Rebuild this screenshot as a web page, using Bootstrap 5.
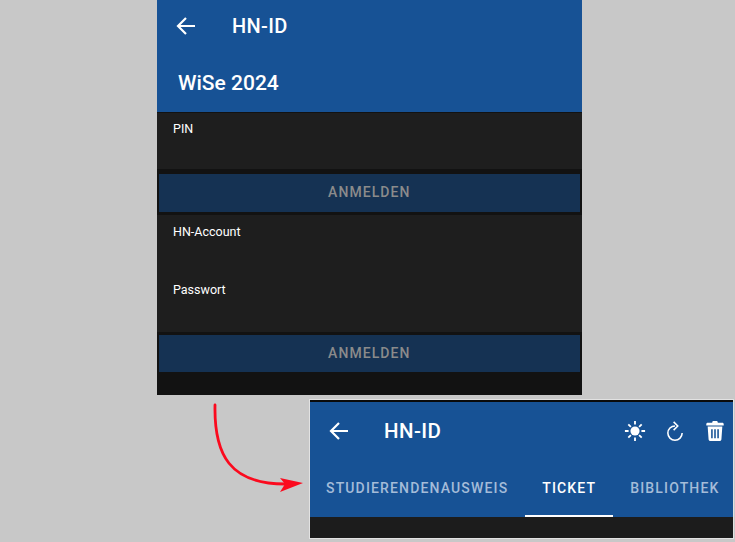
<!DOCTYPE html>
<html lang="de">
<head>
  <meta charset="UTF-8" />
  <meta name="viewport" content="width=device-width, initial-scale=1.0" />
  <title>HN-ID</title>
  <link href="https://cdn.jsdelivr.net/npm/bootstrap@5.3.3/dist/css/bootstrap.min.css" rel="stylesheet">
  <style>
    body {
      background-color: #c8c8c8;
      font-family: Roboto, "Liberation Sans", sans-serif;
      height: 542px;
      overflow: hidden;
      position: relative;
    }

    .shot {
      position: absolute;
      background-color: #121212;
      color: #fff;
    }

    .shot-main {
      left: 157px;
      top: 0;
      width: 425px;
      height: 395px;
    }

    .shot-tabs {
      left: 310px;
      top: 400px;
      width: 423px;
      height: 138px;
      border-top: 2px solid #0a0a0a;
      box-shadow: 0 0 0 1px #e2e2e2;
    }

    .app-blue {
      background-color: #175295;
    }

    .head-main {
      height: 112px;
    }

    .tool-row {
      height: 52px;
    }

    .back-btn {
      width: 20px;
      height: 20px;
      margin-left: 19px;
    }

    .app-title {
      font-size: 20px;
      font-weight: 500;
      line-height: 1;
      letter-spacing: .35px;
      margin-left: 36px;
    }

    .term-title {
      font-size: 21px;
      font-weight: 500;
      line-height: 1;
      padding: 21px 0 0 21px;
    }

    .input-panel {
      background-color: #1e1e1e;
      margin-top: 1px;
      padding-left: 16px;
      font-size: 12.5px;
      line-height: 16px;
    }

    .panel-pin {
      height: 56px;
      padding-top: 8px;
    }

    .panel-account {
      height: 117px;
      padding-top: 9px;
      margin-top: 3px;
    }

    .panel-account .field-gap {
      margin-top: 42px;
    }

    .login-btn {
      background-color: #153253;
      color: #8b8b8b;
      border: 0;
      border-radius: 0;
      font-size: 14px;
      font-weight: 500;
      letter-spacing: 1.05px;
      height: 37.5px;
      margin: 5px 2px 0 1.500px;
      padding: 0;
    }

    .login-btn:disabled {
      background-color: #153253;
      color: #8b8b8b;
      opacity: 1;
    }

    .panel-account + .login-btn {
      margin-top: 3px;
    }

    .head-tabs {
      height: 115px;
    }

    .tool-row-tabs {
      height: 58px;
    }

    .tool-row-tabs .back-btn {
      margin-left: 19px;
    }

    .tool-row-tabs .app-title {
      font-size: 20.5px;
      letter-spacing: .4px;
      margin-left: 35px;
    }

    .tool-icons {
      gap: 18px;
      padding-right: 7px;
    }

    .tool-icons svg {
      width: 22px;
      height: 22px;
      fill: #fff;
    }

    .tool-icons .icon-line {
      fill: none;
      stroke: #fff;
      stroke-width: 1.7;
    }

    .tab-strip {
      height: 57px;
      margin-left: -1px;
    }

    .tab-item {
      color: #a4bcd9;
      font-size: 14px;
      font-weight: 500;
      letter-spacing: 1.15px;
      line-height: 1;
      padding: 0 17px 20px;
      display: flex;
      align-items: flex-end;
      border-bottom: 2px solid transparent;
    }

    .tab-item.is-active {
      color: #fff;
      border-bottom-color: #fff;
    }

    .panel-tail {
      height: 21px;
      margin-top: 0;
      background-color: #1c1c1c;
    }

    .flow-arrow {
      position: absolute;
      left: 205px;
      top: 400px;
      width: 110px;
      height: 100px;
    }
  </style>
</head>
<body>
  <!-- Obere Aufnahme: Anmeldung -->
  <div class="shot shot-main d-flex flex-column">
    <div class="app-blue head-main">
      <div class="tool-row d-flex align-items-center">
        <svg class="back-btn" viewBox="0 0 20 20" fill="none" stroke="#fff" stroke-width="2.2"><path d="M19 10H2M10 2l-8 8 8 8"/></svg>
        <div class="app-title">HN-ID</div>
      </div>
      <div class="term-title">WiSe 2024</div>
    </div>
    <div class="input-panel panel-pin">PIN</div>
    <button class="btn login-btn" type="button" disabled>ANMELDEN</button>
    <div class="input-panel panel-account">
      <div>HN-Account</div>
      <div class="field-gap">Passwort</div>
    </div>
    <button class="btn login-btn" type="button" disabled>ANMELDEN</button>
  </div>

  <!-- Pfeil zwischen den Aufnahmen -->
  <svg class="flow-arrow" viewBox="0 0 110 100">
    <path d="M10 5C9 55 25 84 80 84" fill="none" stroke="#fb0a1e" stroke-width="2.8" stroke-linecap="round"/>
    <path d="M98 83L75 78 80 84 75 92z" fill="#fb0a1e"/>
  </svg>

  <!-- Untere Aufnahme: Tabs -->
  <div class="shot shot-tabs">
    <div class="app-blue head-tabs d-flex flex-column">
      <div class="tool-row-tabs d-flex align-items-center">
        <svg class="back-btn" viewBox="0 0 20 20" fill="none" stroke="#fff" stroke-width="2.2"><path d="M19 10H2M10 2l-8 8 8 8"/></svg>
        <div class="app-title">HN-ID</div>
        <div class="tool-icons d-flex align-items-center ms-auto">
          <svg viewBox="0 0 24 24"><circle cx="12" cy="12" r="5"/><path d="M11 1h2v4h-2zM11 19h2v4h-2zM1 11h4v2H1zM19 11h4v2h-4zM4 5.4 5.4 4l2.8 2.800-1.4 1.400zM15.800 17.200l1.400-1.400 2.800 2.800-1.400 1.400zM4 18.600l2.800-2.800 1.400 1.400L5.400 20zM15.800 6.800 18.600 4 20 5.400l-2.800 2.800z"/></svg>
          <svg class="icon-line" viewBox="0 0 24 24"><path d="M12 6.500A7.800 7.800 0 1 0 19.800 14.300M10.500 2l4.500 4.500-4.500 4.500"/></svg>
          <svg viewBox="0 0 24 24"><path fill-rule="evenodd" d="M9 2.500C9 1.500 9.800 1 10.500 1h3c.7 0 1.500.5 1.500 1.500V3h5c.8 0 1.500.7 1.500 1.500V6h-19V4.500C2.500 3.700 3.200 3 4 3h5zM4 7h16l-1 14c0 1.200-1 2-2 2H7c-1 0-2-.8-2-2zM7.800 10v10h1.700V10zM11.150 10v10h1.700V10zM14.500 10v10h1.700V10z"/></svg>
        </div>
      </div>
      <div class="tab-strip d-flex">
        <div class="tab-item">STUDIERENDENAUSWEIS</div>
        <div class="tab-item is-active">TICKET</div>
        <div class="tab-item">BIBLIOTHEK</div>
      </div>
    </div>
    <div class="input-panel panel-tail"></div>
  </div>

  <script src="https://cdn.jsdelivr.net/npm/bootstrap@5.3.3/dist/js/bootstrap.bundle.min.js"></script>
</body>
</html>
